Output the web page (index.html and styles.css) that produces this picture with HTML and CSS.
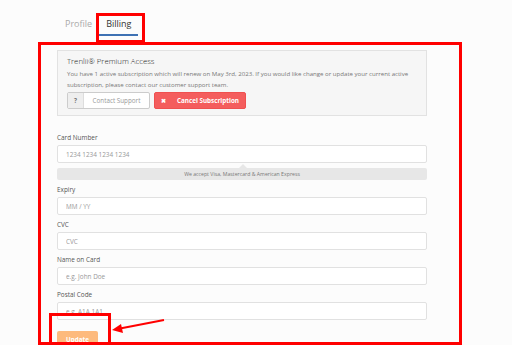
FILE: index.html
```html
<!DOCTYPE html>
<html lang="en">
<head>
    <meta charset="UTF-8">
    <title>Billing</title>
    <link rel="stylesheet" href="styles.css">
</head>
<body>
    <div class="tabs">
        <div class="tab">Profile</div>
        <div class="tab active">Billing</div>
    </div>

    <div class="panel">
        <div class="plan">
            <div class="plan-title">Trenlii® Premium Access</div>
            <p class="plan-text">You have 1 active subscription which will renew on May 3rd, 2023. If you would like change or update your current active subscription, please contact our customer support team.</p>
            <div class="plan-actions">
                <button class="btn-support"><span class="q">?</span><span class="label">Contact Support</span></button>
                <button class="btn-cancel"><span class="x">&#10006;</span><span class="label">Cancel Subscription</span></button>
            </div>
        </div>

        <form class="card-form">
            <label class="field-label">Card Number</label>
            <input class="field" type="text" placeholder="1234 1234 1234 1234">
            <div class="accept">We accept Visa, Mastercard &amp; American Express</div>

            <label class="field-label">Expiry</label>
            <input class="field" type="text" placeholder="MM / YY">

            <label class="field-label">CVC</label>
            <input class="field" type="text" placeholder="CVC">

            <label class="field-label">Name on Card</label>
            <input class="field" type="text" placeholder="e.g. John Doe">

            <label class="field-label">Postal Code</label>
            <input class="field" type="text" placeholder="e.g. A1A 1A1">

            <div class="actions">
                <button type="button" class="btn-update">Update</button>
                <span class="mark"></span>
                <svg class="arrow" width="60" height="20" viewBox="0 0 60 20">
                    <line x1="54" y1="5" x2="10" y2="13.5" stroke="#f00" stroke-width="2"/>
                    <polygon points="2,15 11,9 13,18" fill="#f00"/>
                </svg>
            </div>
        </form>
    </div>
</body>
</html>
```

FILE: styles.css
```css
body {
    margin: 0;
    background-color: #fcfcfc;
    font-family: 'Open Sans', 'Liberation Sans', sans-serif;
    color: #333;
}

.tabs {
    display: flex;
    padding-left: 58px;
    height: 36px;
}

.tab {
    position: relative;
    padding: 18px 7px 4px;
    line-height: 12px;
    font-size: 9px;
    color: #aaa;
}

.tab.active {
    color: #333;
    border-bottom: 2px solid #3f72b4;
}

/* red annotation box round the tab */
.tab.active::after {
    content: '';
    position: absolute;
    left: -3px;
    top: 13px;
    width: 49px;
    height: 30px;
    border: 3px solid #f00;
    box-sizing: border-box;
}

.panel {
    margin: 6px 0 0 38px;
    width: 424px;
    height: 303px;
    box-sizing: border-box;
    border: 3px solid #f00;
    padding: 5px 32px 0 16px;
    overflow: hidden;
}

.plan {
    background-color: #f6f6f6;
    border: 1px solid #e2e2e2;
    padding: 5px 9px 6px;
}

.plan-title {
    font-size: 7.8px;
    line-height: 10px;
    font-weight: 350;
    color: #222;
}

.plan-text {
    margin: 2px 0 0;
    font-size: 6.1px;
    line-height: 11px;
    color: #777;
}

.plan-actions {
    display: flex;
    gap: 4px;
    margin-top: 2px;
}

.plan-actions button {
    display: flex;
    align-items: center;
    height: 17px;
    padding: 0;
    font-family: inherit;
    font-size: 6.3px;
    border-radius: 2px;
    cursor: pointer;
}

.btn-support {
    width: 83px;
    background-color: #fff;
    border: 1px solid #ccc;
    color: #999;
}

.btn-support .q {
    width: 15px;
    height: 100%;
    display: flex;
    align-items: center;
    justify-content: center;
    background-color: #eee;
    border-right: 1px solid #ddd;
    font-weight: bold;
    color: #777;
}

.btn-support .label {
    flex: 1;
    text-align: center;
}

.btn-cancel {
    width: 92px;
    background-color: #f45d5d;
    border: 1px solid #ef5050;
    color: #fff;
    font-weight: bold;
}

.btn-cancel .x {
    width: 16px;
    font-size: 6px;
    text-align: center;
}

.btn-cancel .label {
    flex: 1;
    text-align: center;
}

.card-form {
    margin-top: 17px;
}

.field-label {
    display: block;
    font-size: 6.4px;
    line-height: 10px;
    color: #555;
    margin-bottom: 2px;
}

.field {
    display: block;
    width: 100%;
    height: 18px;
    box-sizing: border-box;
    margin: 0 0 5px;
    padding: 0 8px;
    background-color: #fff;
    border: 1px solid #e1e1e1;
    border-radius: 2px;
    font-family: inherit;
    font-size: 6.4px;
    color: #555;
}

.field::placeholder {
    color: #999;
}

.accept {
    position: relative;
    margin: 1px 0 5px;
    height: 12px;
    line-height: 12px;
    background-color: #e7e7e7;
    border-radius: 2px;
    text-align: center;
    font-size: 5.2px;
    color: #777;
}

.accept::before {
    content: '';
    position: absolute;
    left: 182px;
    top: -4px;
    border-left: 4px solid transparent;
    border-right: 4px solid transparent;
    border-bottom: 4px solid #e7e7e7;
}

.actions {
    position: relative;
    margin-top: 1px;
}

.btn-update {
    width: 41px;
    height: 17px;
    padding: 0;
    background-color: #fdba7d;
    border: none;
    border-radius: 2px;
    color: #fff;
    font-family: inherit;
    font-weight: bold;
    font-size: 6.3px;
}

/* red annotation box round the button */
.mark {
    position: absolute;
    left: -8px;
    top: -12px;
    width: 62px;
    height: 32px;
    border: 3px solid #f00;
    box-sizing: border-box;
}

.arrow {
    position: absolute;
    left: 53px;
    top: -10px;
}
```
